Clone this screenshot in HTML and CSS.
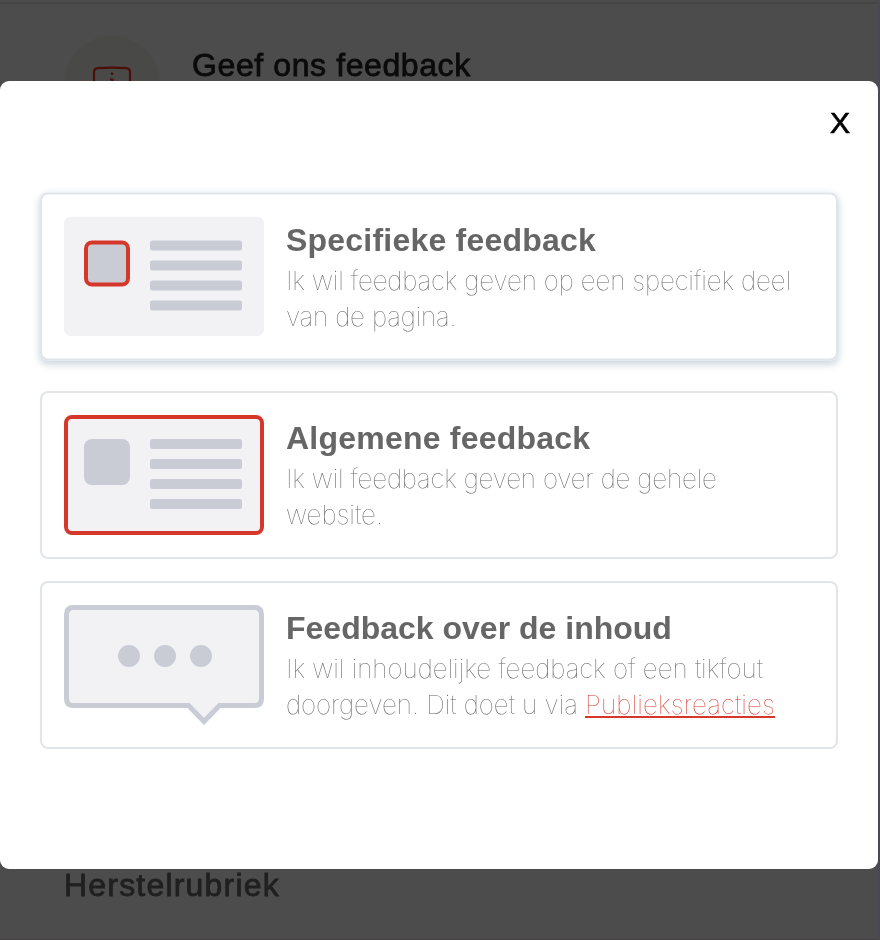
FILE: index.html
```html
<!DOCTYPE html>
<html lang="nl">
<head>
<meta charset="utf-8">
<title>Geef ons feedback</title>
<link rel="stylesheet" href="styles.css">
</head>
<body>
<main class="page">
  <section class="intro">
    <div class="intro-icon">
      <svg width="96" height="96" viewBox="0 0 96 96" fill="none" stroke="#4a0f0a" stroke-width="2.2">
        <path d="M30 60V36Q30 32.500 33.500 32.200Q48 31 62.500 32.200Q66 32.500 66 36V60"/>
        <path d="M48 36.500v2.500M46 43.500H48.500V56"/>
      </svg>
    </div>
    <h1 class="intro-title">Geef ons feedback</h1>
  </section>
  <h2 class="repair-title">Herstelrubriek</h2>
</main>

<div class="dialog" role="dialog">
  <header class="dialog-head">
    <button class="close">X</button>
  </header>
  <div class="options">
    <article class="option option-active">
      <svg class="art" width="200" height="120" viewBox="0 0 200 120">
        <rect width="200" height="119.500" rx="7" fill="#f2f2f5"/>
        <rect x="22" y="26" width="42" height="42" rx="6" fill="#c9ccd5" stroke="#d5372b" stroke-width="4"/>
        <g fill="#c9ccd5">
          <rect x="86" y="24" width="92" height="10" rx="2.500"/>
          <rect x="86" y="44" width="92" height="10" rx="2.500"/>
          <rect x="86" y="64" width="92" height="10" rx="2.500"/>
          <rect x="86" y="84" width="92" height="10" rx="2.500"/>
        </g>
      </svg>
      <div class="copy">
        <h3 class="wide">Specifieke feedback</h3>
        <p class="tight">Ik wil feedback geven op een specifiek deel<br>van de pagina.</p>
      </div>
    </article>
    <article class="option">
      <svg class="art" width="200" height="120" viewBox="0 0 200 120">
        <rect x="2" y="2" width="196" height="116" rx="6" fill="#f2f2f5" stroke="#d5372b" stroke-width="4"/>
        <rect x="20" y="24" width="46" height="46" rx="8" fill="#c9ccd5"/>
        <g fill="#c9ccd5">
          <rect x="86" y="24" width="92" height="10" rx="2.500"/>
          <rect x="86" y="44" width="92" height="10" rx="2.500"/>
          <rect x="86" y="64" width="92" height="10" rx="2.500"/>
          <rect x="86" y="84" width="92" height="10" rx="2.500"/>
        </g>
      </svg>
      <div class="copy">
        <h3 class="wide">Algemene feedback</h3>
        <p><span class="tighter">Ik wil feedback geven over de gehele</span><br>website.</p>
      </div>
    </article>
    <article class="option">
      <svg class="art" width="200" height="120" viewBox="0 0 200 120">
        <path d="M9.500 2.500H190.500Q197.500 2.500 197.500 9.500V93.500Q197.500 100.500 190.500 100.500H155.500L140 116.500L124.500 100.500H9.500Q2.500 100.500 2.500 93.500V9.500Q2.500 2.500 9.500 2.500Z" fill="#f2f2f5" stroke="#c9ccd5" stroke-width="5"/>
        <g fill="#c9ccd5">
          <circle cx="65" cy="51" r="11"/>
          <circle cx="101" cy="51" r="11"/>
          <circle cx="137" cy="51" r="11"/>
        </g>
      </svg>
      <div class="copy">
        <h3>Feedback over de inhoud</h3>
        <p class="snug">Ik wil inhoudelijke feedback of een tikfout<br>doorgeven. Dit doet u via <a class="link" href="#">Publieksreacties</a></p>
      </div>
    </article>
  </div>
</div>
</body>
</html>
```
FILE: styles.css
```css
* { box-sizing: border-box; }

body {
  margin: 0;
  width: 880px;
  height: 940px;
  overflow: hidden;
  position: relative;
  background: #4c4c4c;
  font-family: "Liberation Sans", Arial, sans-serif;
}

h1, h2, h3, p { margin: 0; }

.page {
  display: flex;
  flex-direction: column;
  justify-content: space-between;
  height: 940px;
  padding: 34px 64px 36px;
  border-top: 2px solid #4c4c4c;
  border-right: 2px solid #4a494f;
  border-bottom: 1px solid #463f43;
  box-shadow: inset 0 2px 0 #464646;
  will-change: transform;
}

.intro { display: flex; gap: 32px; }

.intro-icon {
  width: 96px;
  height: 96px;
  border-radius: 50%;
  background: #494947;
}

.intro-icon svg { display: block; }

.intro-title, .repair-title {
  font-weight: 400;
  font-size: 32px;
  line-height: 36px;
  white-space: nowrap;
}

.intro-title {
  margin-top: 11px;
  color: #0b0b0b;
  -webkit-text-stroke: 0.8px #0b0b0b;
  letter-spacing: 0.6px;
}

.repair-title {
  color: #202020;
  -webkit-text-stroke: 0.8px #202020;
  letter-spacing: 1.2px;
}

.dialog {
  position: absolute;
  top: 81px;
  left: 0;
  width: 878px;
  height: 788px;
  border-radius: 9px;
  background: #fff;
  will-change: transform;
}

.dialog-head {
  display: flex;
  justify-content: flex-end;
  height: 112px;
  padding: 24px 28px 0 0;
}

.close {
  height: 36px;
  padding: 0;
  border: 0;
  background: none;
  color: #000;
  font: 400 30px/36px "Liberation Sans", Arial, sans-serif;
  -webkit-text-stroke: 0.7px #000;
}

.options {
  display: flex;
  flex-direction: column;
  gap: 22px;
  padding: 0 40px;
}

.option {
  display: flex;
  gap: 22px;
  height: 168px;
  padding: 22px;
  border: 2px solid #e1e5ea;
  border-radius: 8px;
}

.option-active {
  margin-bottom: 8px;
  box-shadow: 0 3px 7px 1px rgba(150, 170, 190, 0.45);
  transform: translateY(-0.5px);
}

.art { display: block; flex: none; }

.copy { color: #666; white-space: nowrap; }

.copy h3 {
  margin-top: 4px;
  font-size: 32px;
  font-weight: 700;
  line-height: 38px;
}

.copy .wide { letter-spacing: 0.22px; }

.copy p {
  margin-top: 4px;
  font: 100 26px/36px Inter, "Liberation Sans", sans-serif;
}

.tight { letter-spacing: -0.17px; }
.tighter { letter-spacing: -0.21px; }
.snug { letter-spacing: -0.05px; }

.link {
  color: #d5372b;
  letter-spacing: 0.13px;
  text-decoration: underline;
  text-decoration-thickness: 2px;
  text-underline-offset: 2px;
  text-decoration-skip-ink: none;
}
```
